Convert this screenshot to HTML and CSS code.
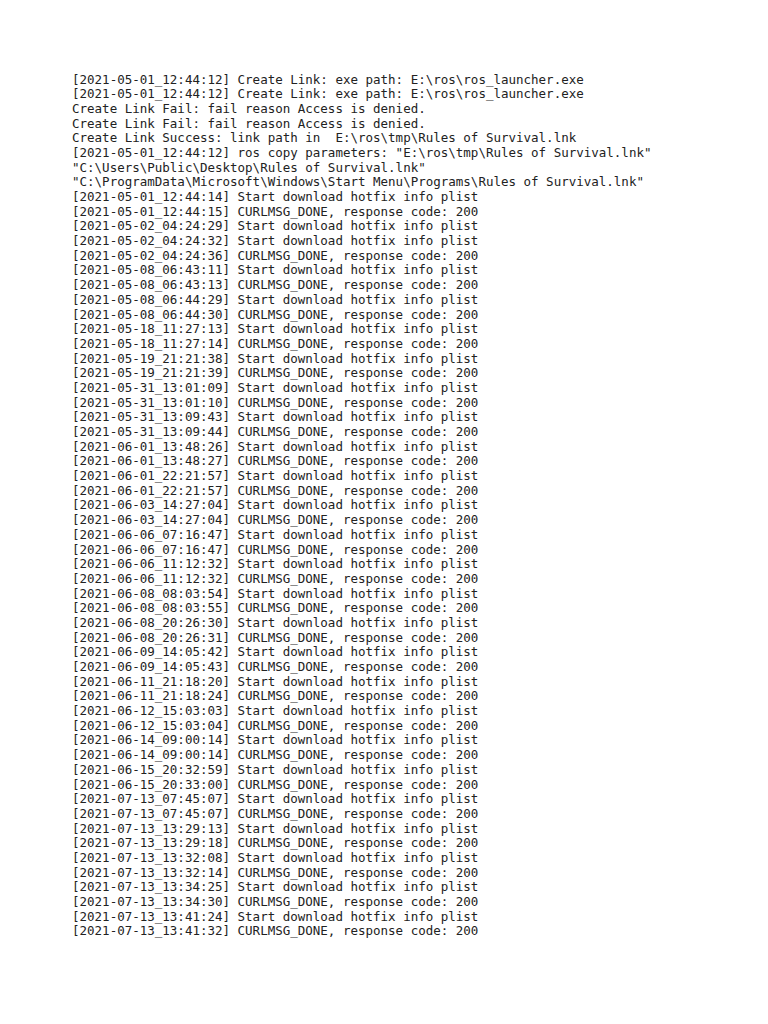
FILE: index.html
```html
<!DOCTYPE html>
<html>
<head>
<meta charset="utf-8">
<link rel="stylesheet" href="styles.css">
</head>
<body>
<pre class="log">[2021-05-01_12:44:12] Create Link: exe path: E:\ros\ros_launcher.exe
[2021-05-01_12:44:12] Create Link: exe path: E:\ros\ros_launcher.exe
Create Link Fail: fail reason Access is denied.
Create Link Fail: fail reason Access is denied.
Create Link Success: link path in  E:\ros\tmp\Rules of Survival.lnk
[2021-05-01_12:44:12] ros copy parameters: "E:\ros\tmp\Rules of Survival.lnk"
"C:\Users\Public\Desktop\Rules of Survival.lnk"
"C:\ProgramData\Microsoft\Windows\Start Menu\Programs\Rules of Survival.lnk"
[2021-05-01_12:44:14] Start download hotfix info plist
[2021-05-01_12:44:15] CURLMSG_DONE, response code: 200
[2021-05-02_04:24:29] Start download hotfix info plist
[2021-05-02_04:24:32] Start download hotfix info plist
[2021-05-02_04:24:36] CURLMSG_DONE, response code: 200
[2021-05-08_06:43:11] Start download hotfix info plist
[2021-05-08_06:43:13] CURLMSG_DONE, response code: 200
[2021-05-08_06:44:29] Start download hotfix info plist
[2021-05-08_06:44:30] CURLMSG_DONE, response code: 200
[2021-05-18_11:27:13] Start download hotfix info plist
[2021-05-18_11:27:14] CURLMSG_DONE, response code: 200
[2021-05-19_21:21:38] Start download hotfix info plist
[2021-05-19_21:21:39] CURLMSG_DONE, response code: 200
[2021-05-31_13:01:09] Start download hotfix info plist
[2021-05-31_13:01:10] CURLMSG_DONE, response code: 200
[2021-05-31_13:09:43] Start download hotfix info plist
[2021-05-31_13:09:44] CURLMSG_DONE, response code: 200
[2021-06-01_13:48:26] Start download hotfix info plist
[2021-06-01_13:48:27] CURLMSG_DONE, response code: 200
[2021-06-01_22:21:57] Start download hotfix info plist
[2021-06-01_22:21:57] CURLMSG_DONE, response code: 200
[2021-06-03_14:27:04] Start download hotfix info plist
[2021-06-03_14:27:04] CURLMSG_DONE, response code: 200
[2021-06-06_07:16:47] Start download hotfix info plist
[2021-06-06_07:16:47] CURLMSG_DONE, response code: 200
[2021-06-06_11:12:32] Start download hotfix info plist
[2021-06-06_11:12:32] CURLMSG_DONE, response code: 200
[2021-06-08_08:03:54] Start download hotfix info plist
[2021-06-08_08:03:55] CURLMSG_DONE, response code: 200
[2021-06-08_20:26:30] Start download hotfix info plist
[2021-06-08_20:26:31] CURLMSG_DONE, response code: 200
[2021-06-09_14:05:42] Start download hotfix info plist
[2021-06-09_14:05:43] CURLMSG_DONE, response code: 200
[2021-06-11_21:18:20] Start download hotfix info plist
[2021-06-11_21:18:24] CURLMSG_DONE, response code: 200
[2021-06-12_15:03:03] Start download hotfix info plist
[2021-06-12_15:03:04] CURLMSG_DONE, response code: 200
[2021-06-14_09:00:14] Start download hotfix info plist
[2021-06-14_09:00:14] CURLMSG_DONE, response code: 200
[2021-06-15_20:32:59] Start download hotfix info plist
[2021-06-15_20:33:00] CURLMSG_DONE, response code: 200
[2021-07-13_07:45:07] Start download hotfix info plist
[2021-07-13_07:45:07] CURLMSG_DONE, response code: 200
[2021-07-13_13:29:13] Start download hotfix info plist
[2021-07-13_13:29:18] CURLMSG_DONE, response code: 200
[2021-07-13_13:32:08] Start download hotfix info plist
[2021-07-13_13:32:14] CURLMSG_DONE, response code: 200
[2021-07-13_13:34:25] Start download hotfix info plist
[2021-07-13_13:34:30] CURLMSG_DONE, response code: 200
[2021-07-13_13:41:24] Start download hotfix info plist
[2021-07-13_13:41:32] CURLMSG_DONE, response code: 200</pre>
</body>
</html>
```

FILE: styles.css
```css
html, body {
  margin: 0;
  padding: 0;
  background: #ffffff;
}
body {
  width: 768px;
  height: 1024px;
  overflow: hidden;
}
.log {
  margin: 0;
  padding: 72.5px 0 0 72px;
  font-family: "DejaVu Sans Mono", monospace;
  font-size: 12.5px;
  line-height: 14.69px;
  color: #222222;
  white-space: pre;
}
```
